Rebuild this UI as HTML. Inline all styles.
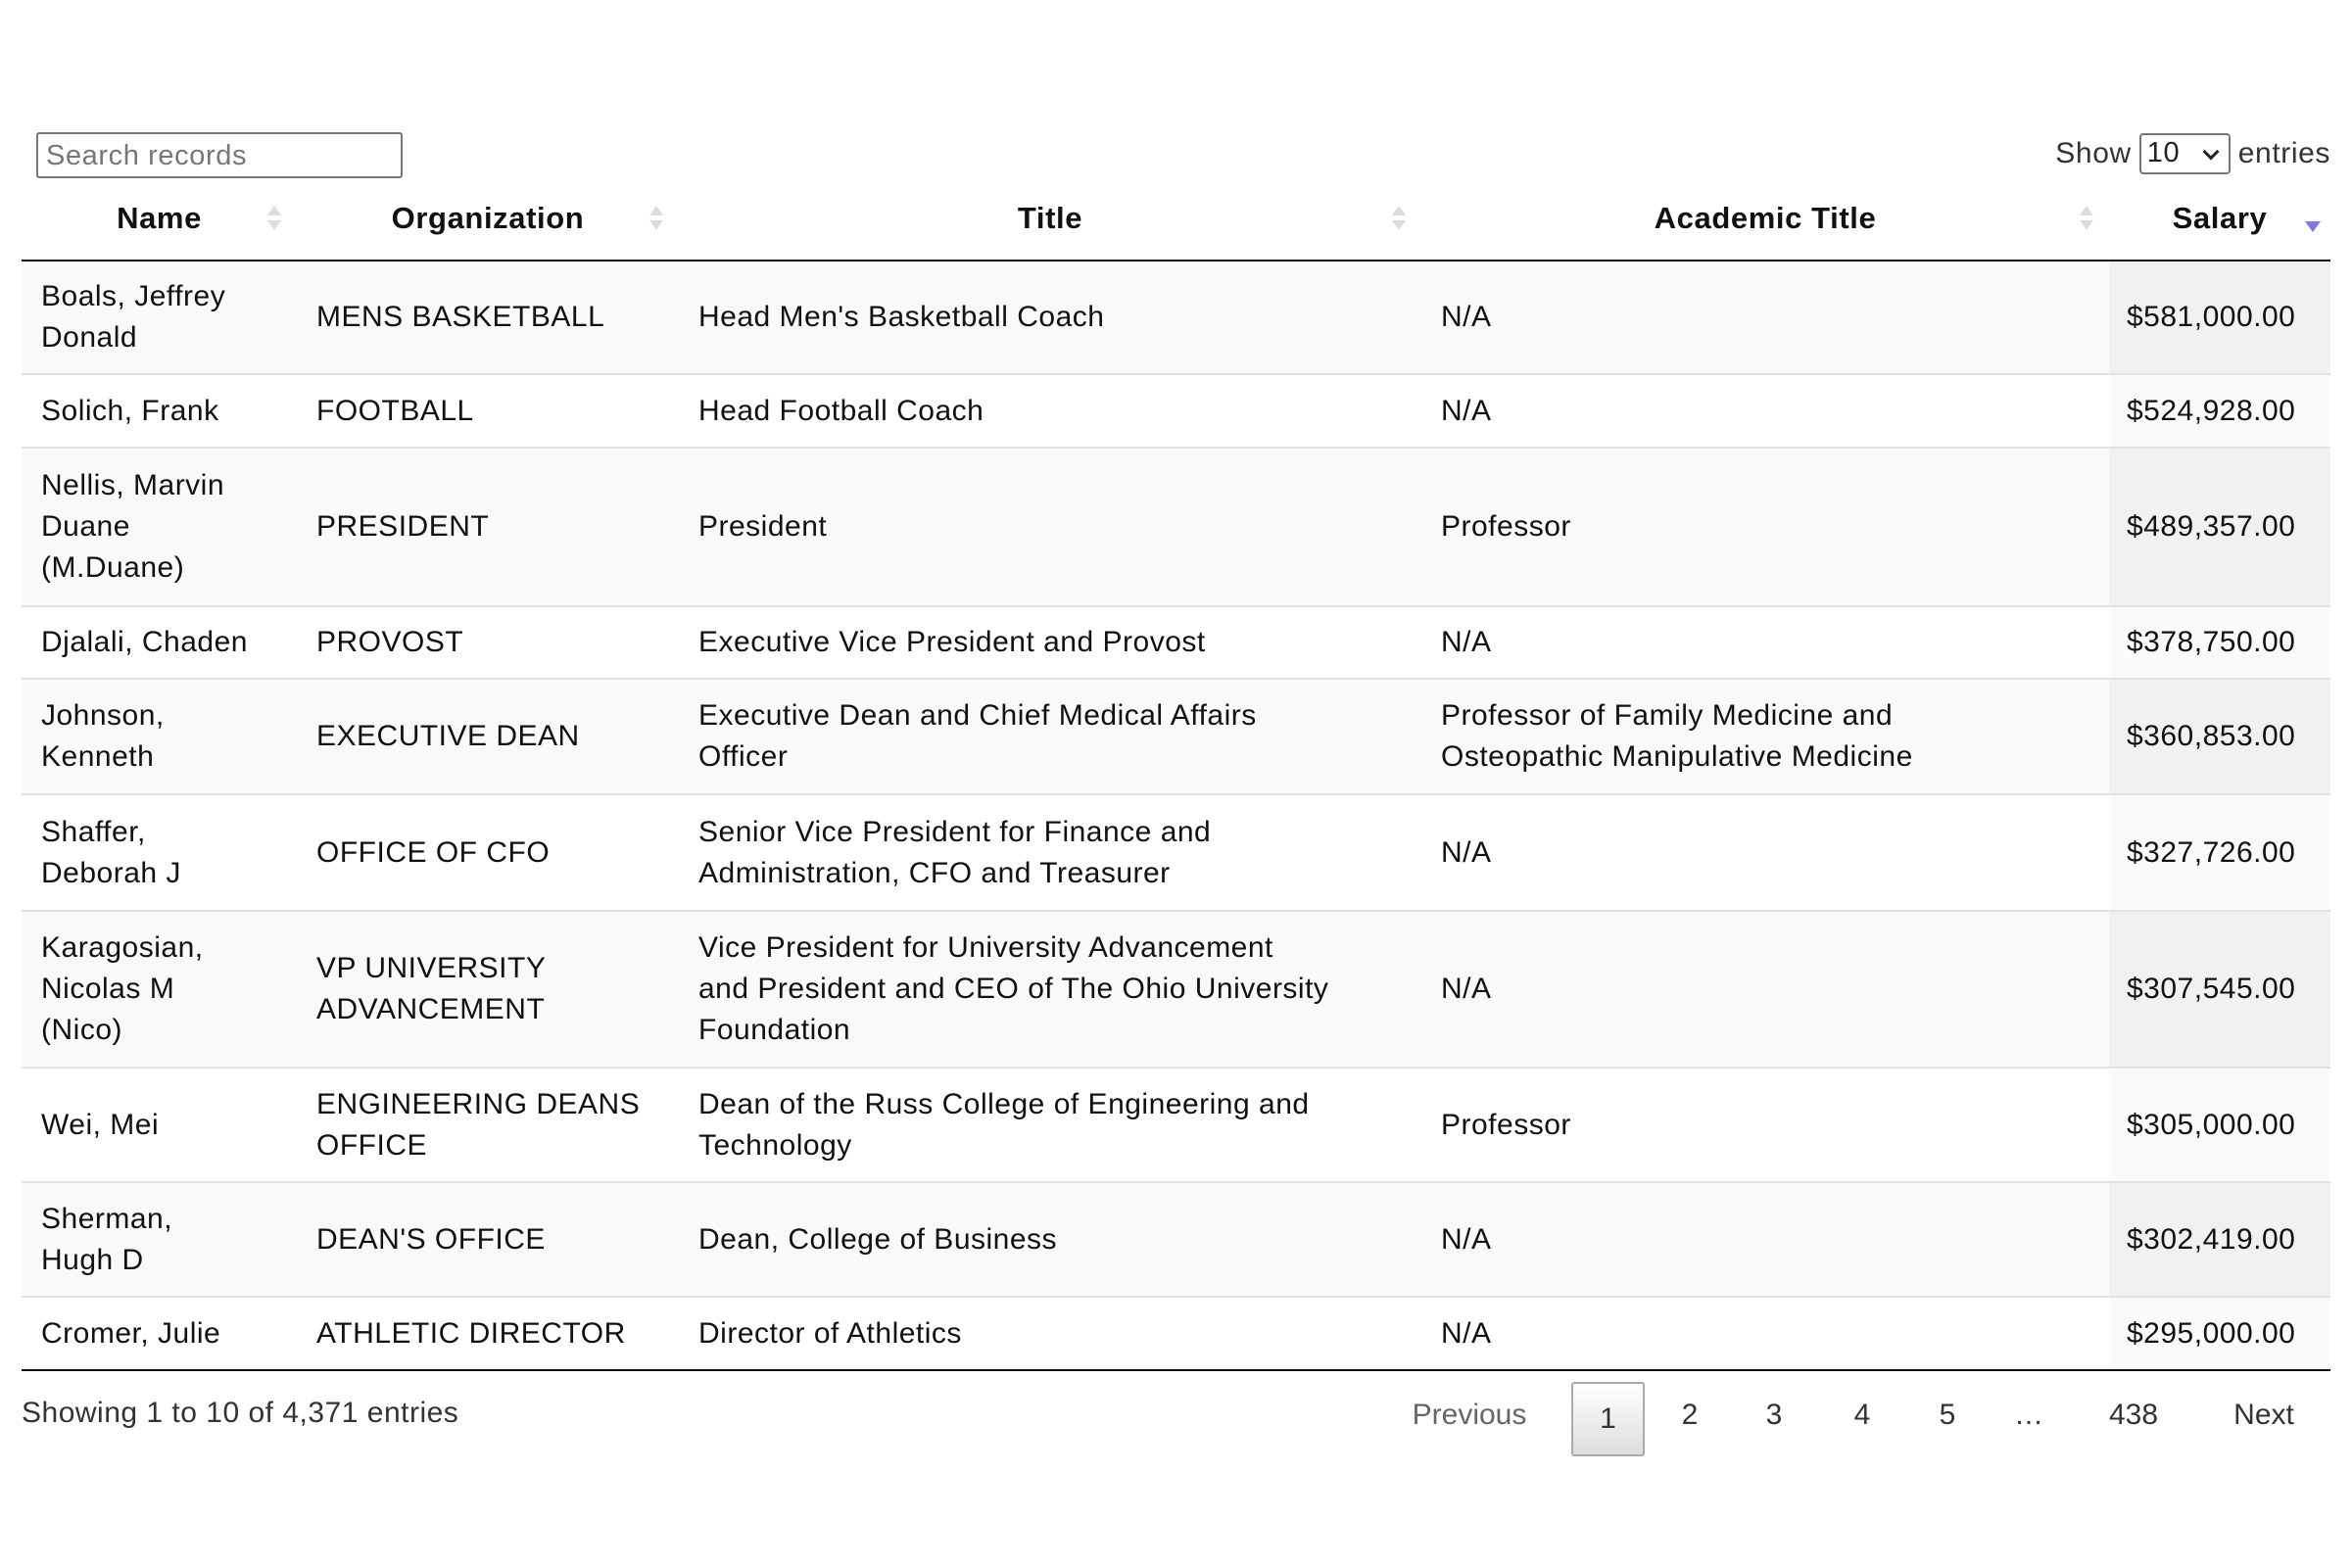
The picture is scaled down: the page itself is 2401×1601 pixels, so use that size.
<!DOCTYPE html>
<html><head><meta charset="utf-8"><style>
*{box-sizing:border-box;margin:0;padding:0}
body{width:2401px;height:1601px;background:#fff;font-family:"Liberation Sans",sans-serif;color:#111;position:relative;overflow:hidden}
.search{position:absolute;left:37px;top:135px;width:374px;height:47px;border:2px solid #777;border-radius:3px;font-size:29px;color:#777;padding:6px 8px;letter-spacing:0.6px}
.show{position:absolute;top:136px;right:22px;font-size:30px;color:#333;display:flex;align-items:center;gap:8px;letter-spacing:0.6px}
.sel{width:93px;height:42px;border:2px solid #777;border-radius:4px;font-size:29px;color:#222;padding:2px 6px;position:relative}
.sel:after{content:"";position:absolute;right:12px;top:11px;width:9px;height:9px;border-right:3px solid #222;border-bottom:3px solid #222;transform:rotate(45deg)}
table{position:absolute;left:22px;top:196px;width:2357px;border-collapse:collapse;table-layout:fixed}
th{height:70px;padding-bottom:16px;font-size:31px;font-weight:bold;text-align:center;position:relative;border-bottom:2px solid #111;letter-spacing:0.6px}
th .s{position:absolute;right:16px;top:14px;width:14px;height:28px}
th .s:before{content:"";position:absolute;left:0;top:0;border:7px solid transparent;border-bottom:10px solid #ddd;border-top:0}
th .s:after{content:"";position:absolute;left:0;top:15px;border:7px solid transparent;border-top:10px solid #ddd;border-bottom:0}
th .d{position:absolute;right:10px;top:30px;border:8px solid transparent;border-top:11px solid #7b7bdc;border-bottom:0}
td{font-size:30px;line-height:42px;padding:0 20px;vertical-align:middle;border-top:2px solid #e2e2e2;white-space:nowrap;letter-spacing:0.5px}
tr:first-child td{border-top:none}
tbody tr:nth-child(odd) td{background:#f9f9f9}
tbody tr:nth-child(odd) td:last-child{background:#f1f1f1}
tbody tr:nth-child(even) td:last-child{background:#fafafa}
td:last-child{padding-left:18px}
.bot{position:absolute;left:22px;top:1398px;width:2357px;height:2px;background:#111}
.info{position:absolute;left:22px;top:1426px;font-size:30px;color:#333;letter-spacing:0.5px}
.pg{position:absolute;top:1428px;font-size:30px;color:#333;transform:translateX(-50%)}
.cur{position:absolute;left:1604px;top:1411px;width:75px;height:76px;border:2px solid #aaa;border-radius:3px;background:linear-gradient(#fff,#ddd);font-size:30px;color:#333;text-align:center;line-height:72px}
</style></head><body>
<div class="search">Search records</div>
<div class="show">Show <div class="sel">10</div> entries</div>
<table>
<colgroup><col style="width:281px"><col style="width:390px"><col style="width:758px"><col style="width:702px"><col style="width:226px"></colgroup>
<thead><tr><th>Name<span class="s"></span></th><th>Organization<span class="s"></span></th><th>Title<span class="s"></span></th><th>Academic Title<span class="s"></span></th><th>Salary<span class="d"></span></th></tr></thead>
<tbody>
<tr style="height:116px"><td>Boals, Jeffrey<br>Donald</td><td>MENS BASKETBALL</td><td>Head Men's Basketball Coach</td><td>N/A</td><td>$581,000.00</td></tr>
<tr style="height:75px"><td>Solich, Frank</td><td>FOOTBALL</td><td>Head Football Coach</td><td>N/A</td><td>$524,928.00</td></tr>
<tr style="height:162px"><td>Nellis, Marvin<br>Duane<br>(M.Duane)</td><td>PRESIDENT</td><td>President</td><td>Professor</td><td>$489,357.00</td></tr>
<tr style="height:74px"><td>Djalali, Chaden</td><td>PROVOST</td><td>Executive Vice President and Provost</td><td>N/A</td><td>$378,750.00</td></tr>
<tr style="height:118px"><td>Johnson,<br>Kenneth</td><td>EXECUTIVE DEAN</td><td>Executive Dean and Chief Medical Affairs<br>Officer</td><td>Professor of Family Medicine and<br>Osteopathic Manipulative Medicine</td><td>$360,853.00</td></tr>
<tr style="height:119px"><td>Shaffer,<br>Deborah J</td><td>OFFICE OF CFO</td><td>Senior Vice President for Finance and<br>Administration, CFO and Treasurer</td><td>N/A</td><td>$327,726.00</td></tr>
<tr style="height:160px"><td>Karagosian,<br>Nicolas M<br>(Nico)</td><td>VP UNIVERSITY<br>ADVANCEMENT</td><td>Vice President for University Advancement<br>and President and CEO of The Ohio University<br>Foundation</td><td>N/A</td><td>$307,545.00</td></tr>
<tr style="height:117px"><td>Wei, Mei</td><td>ENGINEERING DEANS<br>OFFICE</td><td>Dean of the Russ College of Engineering and<br>Technology</td><td>Professor</td><td>$305,000.00</td></tr>
<tr style="height:117px"><td>Sherman,<br>Hugh D</td><td>DEAN'S OFFICE</td><td>Dean, College of Business</td><td>N/A</td><td>$302,419.00</td></tr>
<tr style="height:75px"><td>Cromer, Julie</td><td>ATHLETIC DIRECTOR</td><td>Director of Athletics</td><td>N/A</td><td>$295,000.00</td></tr>
</tbody></table>
<div class="bot"></div>
<div class="info">Showing 1 to 10 of 4,371 entries</div>
<div class="pg" style="left:1500px;color:#666">Previous</div>
<div class="cur">1</div>
<div class="pg" style="left:1725px">2</div>
<div class="pg" style="left:1811px">3</div>
<div class="pg" style="left:1901px">4</div>
<div class="pg" style="left:1988px">5</div>
<div class="pg" style="left:2071px">…</div>
<div class="pg" style="left:2178px">438</div>
<div class="pg" style="left:2311px">Next</div>
</body></html>
